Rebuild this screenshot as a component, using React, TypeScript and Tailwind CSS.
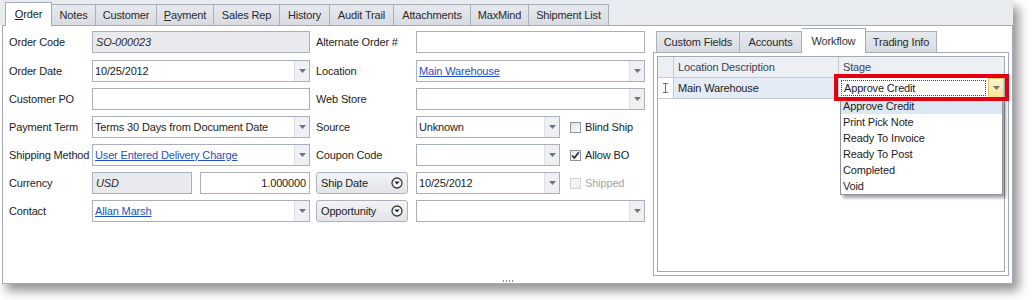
import type { ReactNode } from "react";

const mainTabs = [
  { key: "Order", w: "w-[47px]", accel: "O" },
  { key: "Notes", w: "w-[44px]" },
  { key: "Customer", w: "w-[61px]" },
  { key: "Payment", w: "w-[57px]", accel: "P" },
  { key: "Sales Rep", w: "w-[66px]" },
  { key: "History", w: "w-[50px]" },
  { key: "Audit Trail", w: "w-[64px]" },
  { key: "Attachments", w: "w-[77px]" },
  { key: "MaxMind", w: "w-[58px]" },
  { key: "Shipment List", w: "w-[80px]" },
];

const subTabs = [
  { key: "Custom Fields", w: "w-[84px]" },
  { key: "Accounts", w: "w-[62px]" },
  { key: "Workflow", w: "w-[64px]" },
  { key: "Trading Info", w: "w-[71px]" },
];

const stages = ["Approve Credit", "Print Pick Note", "Ready To Invoice", "Ready To Post", "Completed", "Void"];

function Arrow() {
  return (
    <svg width="7" height="4" viewBox="0 0 7 4">
      <path d="M0 0h7L3.5 4z" fill="#6f7680" />
    </svg>
  );
}

function CircleDown() {
  return (
    <svg width="12" height="12" viewBox="0 0 12 12">
      <circle cx="6" cy="6" r="5" fill="#f6f6f6" stroke="#3c3c3c" strokeWidth="1.3" />
      <path d="M3.4 4.6h5.2L6 7.6z" fill="#262626" />
    </svg>
  );
}

function TabLabel({ text, accel }: { text: string; accel?: string }) {
  if (!accel) return <>{text}</>;
  return (
    <>
      <span className="underline">{accel}</span>
      {text.slice(1)}
    </>
  );
}

function Label({ children, w = "w-[83px]" }: { children: ReactNode; w?: string }) {
  return <div className={`${w} shrink-0 flex items-center whitespace-nowrap`}>{children}</div>;
}

function TextBox({
  w,
  value,
  muted,
  right,
}: {
  w: string;
  value?: string;
  muted?: boolean;
  right?: boolean;
}) {
  return (
    <div
      className={`${w} h-[22px] shrink-0 flex items-center border border-[#a9b0bb] px-[3px] ${
        muted ? "bg-[#e8eaed] italic text-[#2a2a2a]" : "bg-white"
      } ${right ? "justify-end" : ""}`}
    >
      {value}
    </div>
  );
}

function Combo({ w, value, link }: { w: string; value?: string; link?: boolean }) {
  return (
    <div className={`${w} h-[22px] shrink-0 flex border border-[#a9b0bb] bg-white`}>
      <div className={`flex-1 flex items-center pl-[2px] ${link ? "text-[#1f4fc4] underline" : ""}`}>
        {value}
      </div>
      <div className="w-[15px] flex items-center justify-center bg-[#eef0f3] border-l border-[#dde1e6]">
        <Arrow />
      </div>
    </div>
  );
}

function DropButton({ text }: { text: string }) {
  return (
    <div className="w-[92px] h-[22px] shrink-0 flex items-center justify-between rounded-[3px] border border-[#adb3bc] bg-gradient-to-b from-[#f3f4f6] to-[#e1e4e8] pl-[4px] pr-[4px]">
      <span>{text}</span>
      <CircleDown />
    </div>
  );
}

function Check({ label, checked, disabled }: { label: string; checked?: boolean; disabled?: boolean }) {
  return (
    <div className={`ml-[10px] flex items-center gap-[4px] ${disabled ? "text-[#a5a5a5]" : ""}`}>
      <div
        className={`w-[11px] h-[11px] flex items-center justify-center border ${
          disabled
            ? "border-[#cfd1d4] bg-[#f3f3f3]"
            : "border-[#8e949c] bg-gradient-to-br from-[#e2e3e5] to-[#fbfbfb]"
        }`}
      >
        {checked ? (
          <svg width="9" height="9" viewBox="0 0 9 9">
            <path d="M1.2 4.6l2.2 2.4L7.8 1.2" fill="none" stroke="#2b2b2b" strokeWidth="1.6" />
          </svg>
        ) : null}
      </div>
      <span>{label}</span>
    </div>
  );
}

function Row({ children, extra = "" }: { children: ReactNode; extra?: string }) {
  return <div className={`flex h-[22px] ${extra}`}>{children}</div>;
}

export default function App() {
  return (
    <div className="w-[1033px] h-[300px] bg-white font-['Liberation_Sans',Arial,sans-serif] text-[11px] tracking-[-0.15px] text-[#1c1c1c]">
      <div className="w-[1013px] shadow-[6px_7px_10px_rgba(0,0,0,0.42)] bg-white">
        {/* main tab strip */}
        <div className="h-[25px] bg-[#e8ebef] flex items-end pl-[5px]">
          {mainTabs.map((t, i) =>
            i === 0 ? (
              <div
                key={t.key}
                className={`${t.w} h-[24px] -mb-px relative z-10 flex items-center justify-center bg-white border border-b-0 border-[#a2aab5]`}
              >
                <TabLabel text={t.key} accel={t.accel} />
              </div>
            ) : (
              <div
                key={t.key}
                className={`${t.w} h-[21px] flex items-center justify-center bg-gradient-to-b from-[#e6e9ed] to-[#d8dce2] border-t border-r border-[#a9b0ba] text-[#2a2a2a]`}
              >
                <TabLabel text={t.key} accel={t.accel} />
              </div>
            )
          )}
        </div>

        {/* main panel */}
        <div className="ml-[2px] w-[1011px] h-[259px] border border-[#a2aab5] bg-white flex flex-col">
          <div className="flex flex-1">
            {/* order form */}
            <div className="w-[650px] shrink-0 pl-[6px] pt-[5px] flex flex-col gap-[6px]">
              <Row extra="mb-px">
                <Label>Order Code</Label>
                <TextBox w="w-[218px]" value="SO-000023" muted />
                <Label w="ml-[6px] w-[100px]">Alternate Order #</Label>
                <TextBox w="w-[229px]" />
              </Row>
              <Row>
                <Label>Order Date</Label>
                <Combo w="w-[218px]" value="10/25/2012" />
                <Label w="ml-[6px] w-[100px]">Location</Label>
                <Combo w="w-[229px]" value="Main Warehouse" link />
              </Row>
              <Row>
                <Label>Customer PO</Label>
                <TextBox w="w-[218px]" />
                <Label w="ml-[6px] w-[100px]">Web Store</Label>
                <Combo w="w-[229px]" />
              </Row>
              <Row>
                <Label>Payment Term</Label>
                <Combo w="w-[218px]" value="Terms 30 Days from Document Date" />
                <Label w="ml-[6px] w-[100px]">Source</Label>
                <Combo w="w-[144px]" value="Unknown" />
                <Check label="Blind Ship" />
              </Row>
              <Row>
                <Label>Shipping Method</Label>
                <Combo w="w-[218px]" value="User Entered Delivery Charge" link />
                <Label w="ml-[6px] w-[100px]">Coupon Code</Label>
                <Combo w="w-[144px]" />
                <Check label="Allow BO" checked />
              </Row>
              <Row>
                <Label>Currency</Label>
                <TextBox w="w-[100px]" value="USD" muted />
                <div className="w-[8px] shrink-0" />
                <TextBox w="w-[110px]" value="1.000000" right />
                <div className="w-[6px] shrink-0" />
                <DropButton text="Ship Date" />
                <div className="w-[8px] shrink-0" />
                <Combo w="w-[144px]" value="10/25/2012" />
                <Check label="Shipped" disabled />
              </Row>
              <Row>
                <Label>Contact</Label>
                <Combo w="w-[218px]" value="Allan Marsh" link />
                <div className="w-[6px] shrink-0" />
                <DropButton text="Opportunity" />
                <div className="w-[8px] shrink-0" />
                <Combo w="w-[229px]" />
              </Row>
            </div>

            {/* workflow side */}
            <div className="flex-1 pt-[2px]">
              <div className="h-[24px] flex items-end pl-[3px]">
                {subTabs.map((t, i) =>
                  t.key === "Workflow" ? (
                    <div
                      key={t.key}
                      className={`${t.w} h-[25px] -mb-px relative z-10 flex items-center justify-center bg-white border-t border-r border-[#a2aab5] text-[#333]`}
                    >
                      {t.key}
                    </div>
                  ) : (
                    <div
                      key={t.key}
                      className={`${t.w} h-[21px] flex items-center justify-center bg-gradient-to-b from-[#e6e9ed] to-[#d8dce2] border-t border-r border-[#a9b0ba] text-[#2a2a2a] ${
                        i === 0 ? "border-l" : ""
                      }`}
                    >
                      {t.key}
                    </div>
                  )
                )}
              </div>
              <div className="w-[356px] h-[224px] border border-[#a2aab5] p-[3px]">
                <div className="h-full border border-[#a2aab5] bg-white">
                  {/* grid header */}
                  <div className="flex h-[21px] bg-[#eceff3] border-b border-[#c6cbd3] text-[#3a4452]">
                    <div className="w-[16px] border-r border-[#c6cbd3]" />
                    <div className="w-[165px] border-r border-[#c6cbd3] flex items-center pl-[4px]">
                      Location Description
                    </div>
                    <div className="w-[165px] flex items-center pl-[4px]">Stage</div>
                  </div>
                  {/* grid row */}
                  <div className="flex h-[21px] border-b border-[#c6cbd3]">
                    <div className="w-[16px] border-r border-[#c6cbd3] flex items-center justify-center">
                      <svg width="5" height="10" viewBox="0 0 5 10">
                        <path d="M0 0.5h5M0 9.5h5M2.5 0.5v9" stroke="#6a6a6a" strokeWidth="1" fill="none" />
                      </svg>
                    </div>
                    <div className="w-[165px] border-r border-[#c6cbd3] bg-[#e3ebf6] flex items-center pl-[4px]">
                      Main Warehouse
                    </div>
                    <div className="w-[165px] relative flex bg-white">
                      <div className="flex-1 flex items-center pl-[2px] pr-[2px]">
                        <div className="flex-1 h-[16px] flex items-center border border-dotted border-[#444] pl-[2px]">
                          Approve Credit
                        </div>
                      </div>
                      <div className="w-[16px] flex items-center justify-center bg-gradient-to-b from-[#fff5c9] to-[#fbe39a] border border-[#e6c874]">
                        <Arrow />
                      </div>
                      {/* highlight annotation */}
                      <div className="absolute -left-[5px] -top-[4px] -right-[5px] -bottom-[3px] border-[4px] border-[#e6000f] z-20 pointer-events-none" />
                      {/* dropdown list */}
                      <div className="absolute left-[1px] top-[19px] w-[163px] border border-[#8f949c] bg-white z-10 shadow-[3px_3px_3px_rgba(0,0,0,0.35)]">
                        {stages.map((s, i) => (
                          <div
                            key={s}
                            className={`h-[16px] flex items-center pl-[2px] ${i === 0 ? "bg-[#dde8f5]" : ""}`}
                          >
                            {s}
                          </div>
                        ))}
                      </div>
                    </div>
                  </div>
                </div>
              </div>
            </div>
          </div>
          {/* splitter grip */}
          <div className="h-[6px] flex items-end justify-center gap-[2px] pb-[1px]">
            <div className="w-[1px] h-[2px] bg-[#8a8f97]" />
            <div className="w-[1px] h-[2px] bg-[#8a8f97]" />
            <div className="w-[1px] h-[2px] bg-[#8a8f97]" />
            <div className="w-[1px] h-[2px] bg-[#8a8f97]" />
          </div>
        </div>
      </div>
    </div>
  );
}
